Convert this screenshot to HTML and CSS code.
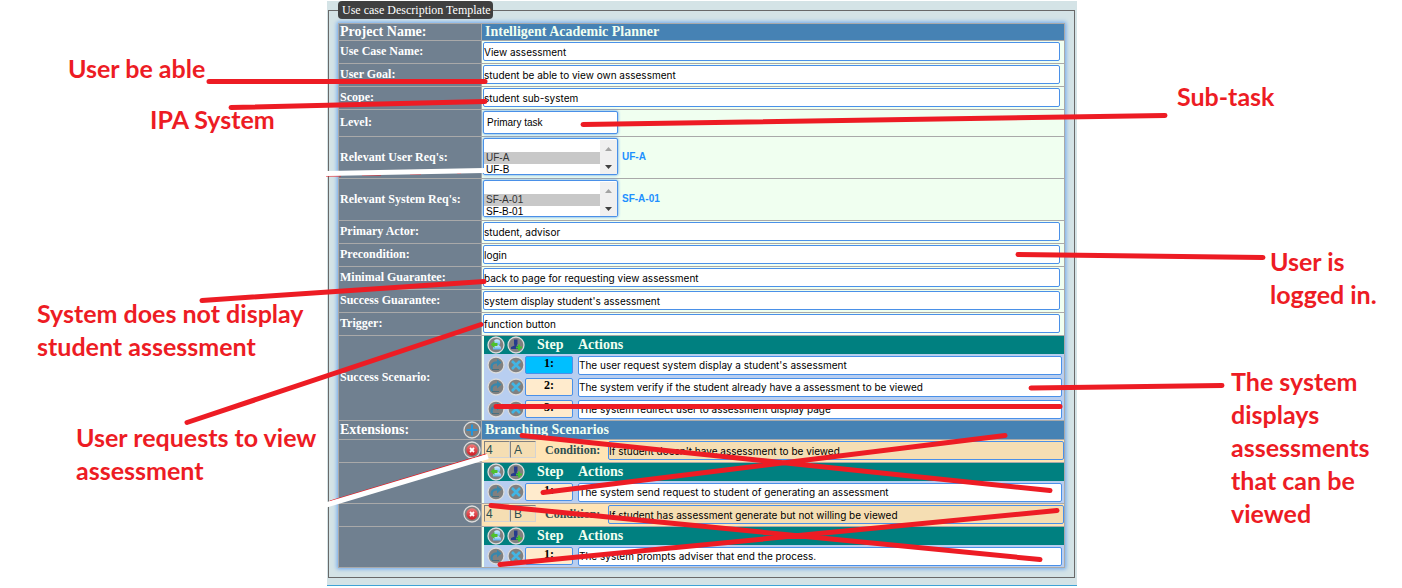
FILE: index.html
```html
<!DOCTYPE html>
<html lang="en">
<head>
<meta charset="utf-8">
<title>Use case Description Template</title>
<link rel="stylesheet" href="styles.css">
</head>
<body>
<svg class="defs" aria-hidden="true">
  <defs>
    <linearGradient id="g-blue" x1="0" y1="0" x2="0" y2="1"><stop offset="0" stop-color="#d4efff"/><stop offset="1" stop-color="#5aaef0"/></linearGradient>
    <linearGradient id="g-red" x1="0" y1="0" x2="0" y2="1"><stop offset="0" stop-color="#f07a7a"/><stop offset="1" stop-color="#cf1a22"/></linearGradient>
    <symbol id="disc" viewBox="0 0 18 18"><circle cx="9" cy="9" r="8" fill="#808080" stroke="#dcdcdc" stroke-width="1.3"/></symbol>
    <symbol id="user" viewBox="0 0 18 18"><use href="#disc"/><circle cx="10" cy="6.500" r="3.200" fill="url(#g-blue)"/><path d="M6 13.500c-.5-3 1.500-4.500 4-4.500s4.500 1.500 4 4.500z" fill="url(#g-blue)"/><path d="M3.500 8.500l4-3.500v2h3v3h-3v2z" fill="#4fc02c"/></symbol>
    <symbol id="actor" viewBox="0 0 18 18"><use href="#disc"/><path d="M7 3.500h3.500v4.500l-1 1.500 3 1.500v2H4v-2l3.500-1.500-.5-1.500z" fill="#263c8c"/><path d="M11 8.500h2v2h2v2h-2v2h-2v-2H9v-2h2z" fill="#45c030"/></symbol>
    <symbol id="redo" viewBox="0 0 18 18"><use href="#disc"/><path d="M5 13C3.500 9 6 6 11 6.500" fill="none" stroke="#3787ad" stroke-width="2.200"/><path d="M10 2.800l4.500 3.700-4.500 4z" fill="#3787ad"/><path d="M5 13.500h7" stroke="#48707f"/></symbol>
    <symbol id="cross" viewBox="0 0 18 18"><use href="#disc"/><path d="M5 5l8 8m0-8l-8 8" stroke="#41b5e4" stroke-width="2.600"/></symbol>
    <symbol id="plus" viewBox="0 0 18 18"><use href="#disc"/><path d="M9 3.500v11M3.500 9h11" stroke="#2496dd" stroke-width="2"/></symbol>
    <symbol id="remove" viewBox="0 0 18 18"><use href="#disc"/><circle cx="9" cy="9" r="5.700" fill="url(#g-red)"/><path d="M7 7l4 4m0-4l-4 4" stroke="#fff" stroke-width="1.800"/></symbol>
    <symbol id="bar" viewBox="0 0 17 35"><path d="M0 0h17v35H0z" fill="#f0f0f0"/><path d="M5 11l3.500-4 3.500 4z" fill="#a3a3a3"/><path d="M5 25l3.500 4 3.500-4z" fill="#404040"/></symbol>
  </defs>
</svg>
<main class="board">
  <form class="panel">
    <fieldset class="template">
      <legend class="title">Use case Description Template</legend>
      <table class="sheet">
        <tr class="row-head"><th class="big" scope="row">Project Name:</th><td class="blue">Intelligent Academic Planner</td></tr>
        <tr class="row"><th><label for="name">Use Case Name:</label></th><td><input class="field" id="name" value="View assessment"></td></tr>
        <tr class="row"><th><label for="goal">User Goal:</label></th><td><input class="field" id="goal" value="student be able to view own assessment"></td></tr>
        <tr class="row"><th><label for="scope">Scope:</label></th><td><input class="field" id="scope" value="student sub-system"></td></tr>
        <tr class="row-level"><th><label for="level">Level:</label></th><td><select class="level" id="level"><option>Primary task</option></select></td></tr>
        <tr class="row-list"><th><label for="ureq">Relevant User Req's:</label></th><td><div class="pick"><div class="listbox"><select class="list" id="ureq" size="3"><option></option><option selected>UF-A</option><option>UF-B</option></select><svg class="scroll"><use href="#bar"/></svg></div><b>UF-A</b></div></td></tr>
        <tr class="row-list"><th><label for="sreq">Relevant System Req's:</label></th><td><div class="pick"><div class="listbox"><select class="list" id="sreq" size="3"><option></option><option selected>SF-A-01</option><option>SF-B-01</option></select><svg class="scroll"><use href="#bar"/></svg></div><b>SF-A-01</b></div></td></tr>
        <tr class="row"><th><label for="primary">Primary Actor:</label></th><td><input class="field" id="primary" value="student, advisor"></td></tr>
        <tr class="row"><th><label for="pre">Precondition:</label></th><td><input class="field" id="pre" value="login"></td></tr>
        <tr class="row"><th><label for="min">Minimal Guarantee:</label></th><td><input class="field" id="min" value="back to page for requesting view assessment"></td></tr>
        <tr class="row"><th><label for="succ">Success Guarantee:</label></th><td><input class="field" id="succ" value="system display student's assessment"></td></tr>
        <tr class="row"><th><label for="trig">Trigger:</label></th><td><input class="field" id="trig" value="function button"></td></tr>
        <tr><th scope="row">Success Scenario:</th><td class="nest">
          <div class="steps-head"><button type="button" class="icon" aria-label="Add user step"><svg><use href="#user"/></svg></button><button type="button" class="icon" aria-label="Add actor step"><svg><use href="#actor"/></svg></button><span class="step-title">Step</span><span>Actions</span></div>
          <div class="step"><button type="button" class="icon" aria-label="Redo"><svg><use href="#redo"/></svg></button><button type="button" class="icon" aria-label="Delete"><svg><use href="#cross"/></svg></button><label class="num active" for="s1">1:</label><input class="field" id="s1" value="The user request system display a student's assessment"></div>
          <div class="step"><button type="button" class="icon" aria-label="Redo"><svg><use href="#redo"/></svg></button><button type="button" class="icon" aria-label="Delete"><svg><use href="#cross"/></svg></button><label class="num" for="s2">2:</label><input class="field" id="s2" value="The system verify if the student already have a assessment to be viewed"></div>
          <div class="step"><button type="button" class="icon" aria-label="Redo"><svg><use href="#redo"/></svg></button><button type="button" class="icon" aria-label="Delete"><svg><use href="#cross"/></svg></button><label class="num" for="s3">3:</label><input class="field" id="s3" value="The system redirect user to assessment display page"></div>
        </td></tr>
        <tr class="row-ext"><th class="big" scope="row"><div class="ext">Extensions:<button type="button" class="icon" aria-label="Add extension"><svg><use href="#plus"/></svg></button></div></th><td class="blue">Branching Scenarios</td></tr>
        <tr class="row"><th><div class="ext end"><button type="button" class="icon" aria-label="Remove extension"><svg><use href="#remove"/></svg></button></div></th><td class="branch"><div class="cond"><input class="code" aria-label="Step" value="4" readonly><input class="code" aria-label="Branch" value="A" readonly><label for="c1">Condition:</label><input class="field tan" id="c1" value="If student doesn't have assessment to be viewed"></div></td></tr>
        <tr><th></th><td class="nest">
          <div class="steps-head"><button type="button" class="icon" aria-label="Add user step"><svg><use href="#user"/></svg></button><button type="button" class="icon" aria-label="Add actor step"><svg><use href="#actor"/></svg></button><span class="step-title">Step</span><span>Actions</span></div>
          <div class="step"><button type="button" class="icon" aria-label="Redo"><svg><use href="#redo"/></svg></button><button type="button" class="icon" aria-label="Delete"><svg><use href="#cross"/></svg></button><label class="num" for="a1">1:</label><input class="field" id="a1" value="The system send request to student of generating an assessment"></div>
        </td></tr>
        <tr class="row"><th><div class="ext end"><button type="button" class="icon" aria-label="Remove extension"><svg><use href="#remove"/></svg></button></div></th><td class="branch"><div class="cond"><input class="code" aria-label="Step" value="4" readonly><input class="code" aria-label="Branch" value="B" readonly><label for="c2">Condition:</label><input class="field tan" id="c2" value="If student has assessment generate but not willing be viewed"></div></td></tr>
        <tr><th></th><td class="nest">
          <div class="steps-head"><button type="button" class="icon" aria-label="Add user step"><svg><use href="#user"/></svg></button><button type="button" class="icon" aria-label="Add actor step"><svg><use href="#actor"/></svg></button><span class="step-title">Step</span><span>Actions</span></div>
          <div class="step"><button type="button" class="icon" aria-label="Redo"><svg><use href="#redo"/></svg></button><button type="button" class="icon" aria-label="Delete"><svg><use href="#cross"/></svg></button><label class="num" for="b1">1:</label><input class="field" id="b1" value="The system prompts adviser that end the process."></div>
        </td></tr>
      </table>
    </fieldset>
  </form>
  <svg class="marks" viewBox="0 0 1402 588" preserveAspectRatio="none" aria-hidden="true">
    <g fill="none" stroke="#ed1c24" stroke-width="5" stroke-linecap="round">
      <path d="M209 81.500H485M231 107.500L485 101.500M583 124.500L1165 115.500M1018 254.500L1263 257.500M202 300.500L484 281.500M187 422.500L481 324.500M496 406.500H1060M1031 388L1222 385.500M522 435.500L1050 490.500M543 492.500L1005 435.500M491 505.500L1040 559.500M500 564.500L1057 510.500"/>
      <path d="M326 176H341M362 175H381M410 174H421M457 173H461" stroke-width="1" stroke-linecap="butt"/>
      <path d="M330 501L486 454" stroke-width="1"/>
    </g>
    <g fill="none" stroke="#fff" stroke-width="5"><path d="M326 173.500L484 170.500M326 505L488 456.500"/></g>
  </svg>
  <p class="note n-able">User be able</p>
  <p class="note n-ipa">IPA System</p>
  <p class="note n-system">System does not display<br>student assessment</p>
  <p class="note n-requests">User requests to view<br>assessment</p>
  <p class="note n-sub">Sub-task</p>
  <p class="note n-logged">User is<br>logged in.</p>
  <p class="note n-displays">The system<br>displays<br>assessments<br>that can be<br>viewed</p>
</main>
</body>
</html>
```
FILE: styles.css
```css
* { box-sizing: border-box; }
body { margin: 0; background: #fff; font-family: "Liberation Serif", serif; }
.defs { position: absolute; width: 0; height: 0; }
.board { position: relative; padding: 1px 325px 2px 327px; }
.panel { padding: 0 2px 7px 1px; background: #d4e3e6; border-bottom: 1px solid #3fa3d6; }
.template { margin: 0; padding: 4px 9px 9px; border: 1px solid #696969; min-width: 0; }
.title { padding: 0 2px 0 4px; height: 18px; line-height: 18px; font-size: 12px; color: #fff; background: #404040; border-radius: 4px; }

.sheet { width: 100%; table-layout: fixed; border: 1px solid #a9a9a9; border-spacing: 0; box-shadow: 0 0 4px 1px #6ca6ee; }
th, td { padding: 0; height: 23px; border-bottom: 1px solid #a9a9a9; }
tr:last-child > * { border-bottom: 0; }
th { width: 143px; padding: 0 0 2px 1px; text-align: left; font-size: 12px; line-height: 14px; color: #fff; background: #708090; border-right: 1px solid #a9a9a9; }
td { padding: 1px 4px 0 1px; background: #f0fff0; vertical-align: top; }
.big, .blue { padding-bottom: 0; font-size: 14px; line-height: 16px; }
.blue { padding: 0 3px; font-weight: bold; color: #f0fff0; background: #4682b4; vertical-align: middle; }
.row-head > * { height: 17px; }
.row-level > * { height: 27px; }
.row-list > * { height: 42px; }
.row-ext > * { height: 19px; }

.field { display: block; width: 100%; height: 19px; padding: 0; border: 1px solid #4a90e8; border-radius: 2px; font: 10px Inter, sans-serif; color: #000; background: #fff; outline: 0; }
.level { appearance: none; display: block; width: 135px; height: 23px; padding: 0 3px; border: 1px solid #4a90e8; border-radius: 2px; box-shadow: 0 0 3px #4a90e8; font: 10px "Liberation Sans", sans-serif; color: #000; background: linear-gradient(#000, #000) right 5px center / 5px 1px no-repeat, linear-gradient(#000, #000) right 6px top 11px / 3px 2px no-repeat #fff; }
.pick { display: flex; align-items: center; gap: 4px; font: bold 10px "Liberation Sans", sans-serif; color: #1e90ff; }
.listbox { display: flex; width: 135px; height: 37px; padding-top: 1px; border: 1px solid #4a90e8; border-radius: 2px; box-shadow: 0 0 3px #4a90e8; background: #fff; overflow: hidden; }
.list { flex: 1; min-width: 0; height: 36px; padding: 0; border: 0; font: 10px "Liberation Sans", sans-serif; color: #000; background: #fff; overflow: hidden; outline: 0; }
.list option { height: 12px; min-height: 12px; padding: 0 2px; line-height: 12px; }
.list option:checked { color: #333; background: #c8c8c8 linear-gradient(#c8c8c8, #c8c8c8); }
.scroll { width: 17px; height: 35px; }

.nest { padding: 0 0 0 2px; }
.steps-head, .step { display: flex; align-items: center; padding-left: 3px; }
.steps-head { height: 18px; font-size: 14px; font-weight: bold; color: #f0fff0; background: #008080; }
.step { height: 22px; padding-right: 2px; background: #b8cef0; }
.icon { flex: none; display: block; width: 18px; height: 18px; margin-right: 2px; padding: 0; border: 0; background: none; }
.icon svg { display: block; width: 18px; height: 18px; }
.step .icon + .icon { margin-right: 0; }
.step-title { width: 51px; padding-left: 10px; }
.num { flex: none; width: 48px; height: 18px; margin-right: 5px; border: 1px solid #4a90e8; border-radius: 2px; text-align: center; font-size: 12px; line-height: 13px; font-weight: bold; background: #ffebcd; }
.active { background: #00bfff; }

.ext { display: flex; align-items: center; justify-content: space-between; height: 18px; }
.ext .icon { margin: 0; }
.end { justify-content: flex-end; }
.branch { padding: 1px 0 0 2px; background: #ffe4b5; }
.cond { display: flex; align-items: flex-start; font-size: 12px; line-height: 18px; font-weight: bold; color: #2f4f4f; }
.cond label { width: 72px; padding-left: 9px; flex: none; }
.code { flex: none; width: 26px; height: 17px; padding: 0 1px; border: 1px solid #d3d3d3; border-top-color: #808080; border-left-color: #808080; font: 12px "Liberation Sans", sans-serif; color: #2f4f4f; background: #f5deb3; outline: 0; }
.code + .code { padding: 0 3px; }
.tan { flex: 1; min-width: 0; background: #f5deb3; }

.marks { position: absolute; inset: 0; width: 100%; height: 100%; pointer-events: none; }
.note { position: absolute; margin: 0; font: bold 25px/33px Lato, sans-serif; color: #ed1c24; white-space: nowrap; }
.n-able { left: 68px; top: 52px; }
.n-ipa { left: 150px; top: 103px; }
.n-system { left: 37px; top: 297px; }
.n-requests { left: 76px; top: 421px; }
.n-sub { left: calc(100% - 225px); top: 80px; }
.n-logged { left: calc(100% - 132px); top: 245px; }
.n-displays { left: calc(100% - 171px); top: 365px; }
```
